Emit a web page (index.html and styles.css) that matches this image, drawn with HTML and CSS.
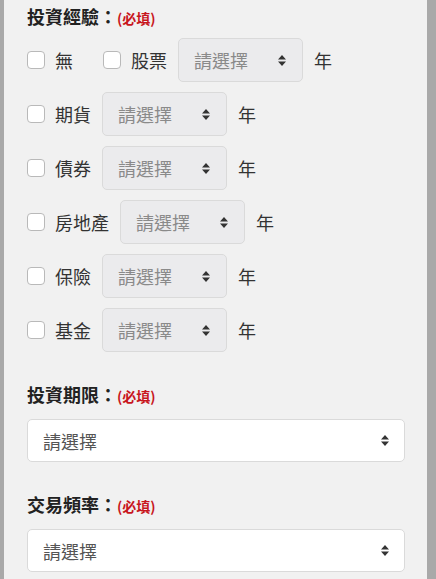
FILE: index.html
```html
<!DOCTYPE html>
<html lang="zh-Hant">
<head>
    <meta charset="UTF-8">
    <meta name="viewport" content="width=device-width, initial-scale=1.0">
    <title>投資經驗</title>
    <link rel="stylesheet" href="styles.css">
</head>
<body>
    <div class="form-panel">
        <h3 class="field-title">投資經驗：<span class="required">(必填)</span></h3>
        <div class="exp-list">
            <div class="exp-row">
                <label class="check-item gap-right"><span class="checkbox"></span>無</label>
                <label class="check-item"><span class="checkbox"></span>股票</label>
                <div class="select-box small disabled">請選擇<svg class="arrows" width="8" height="11" viewBox="0 0 8 11"><path d="M4 0 L8 4.5 H0 Z M0 6.5 H8 L4 11 Z" fill="#333"/></svg></div>
                <span class="unit">年</span>
            </div>
            <div class="exp-row">
                <label class="check-item"><span class="checkbox"></span>期貨</label>
                <div class="select-box small disabled">請選擇<svg class="arrows" width="8" height="11" viewBox="0 0 8 11"><path d="M4 0 L8 4.5 H0 Z M0 6.5 H8 L4 11 Z" fill="#333"/></svg></div>
                <span class="unit">年</span>
            </div>
            <div class="exp-row">
                <label class="check-item"><span class="checkbox"></span>債券</label>
                <div class="select-box small disabled">請選擇<svg class="arrows" width="8" height="11" viewBox="0 0 8 11"><path d="M4 0 L8 4.5 H0 Z M0 6.5 H8 L4 11 Z" fill="#333"/></svg></div>
                <span class="unit">年</span>
            </div>
            <div class="exp-row">
                <label class="check-item"><span class="checkbox"></span>房地產</label>
                <div class="select-box small disabled">請選擇<svg class="arrows" width="8" height="11" viewBox="0 0 8 11"><path d="M4 0 L8 4.5 H0 Z M0 6.5 H8 L4 11 Z" fill="#333"/></svg></div>
                <span class="unit">年</span>
            </div>
            <div class="exp-row">
                <label class="check-item"><span class="checkbox"></span>保險</label>
                <div class="select-box small disabled">請選擇<svg class="arrows" width="8" height="11" viewBox="0 0 8 11"><path d="M4 0 L8 4.5 H0 Z M0 6.5 H8 L4 11 Z" fill="#333"/></svg></div>
                <span class="unit">年</span>
            </div>
            <div class="exp-row">
                <label class="check-item"><span class="checkbox"></span>基金</label>
                <div class="select-box small disabled">請選擇<svg class="arrows" width="8" height="11" viewBox="0 0 8 11"><path d="M4 0 L8 4.5 H0 Z M0 6.5 H8 L4 11 Z" fill="#333"/></svg></div>
                <span class="unit">年</span>
            </div>
        </div>

        <h3 class="field-title spaced">投資期限：<span class="required">(必填)</span></h3>
        <div class="select-box full">請選擇<svg class="arrows" width="8" height="11" viewBox="0 0 8 11"><path d="M4 0 L8 4.5 H0 Z M0 6.5 H8 L4 11 Z" fill="#333"/></svg></div>

        <h3 class="field-title spaced">交易頻率：<span class="required">(必填)</span></h3>
        <div class="select-box full">請選擇<svg class="arrows" width="8" height="11" viewBox="0 0 8 11"><path d="M4 0 L8 4.5 H0 Z M0 6.5 H8 L4 11 Z" fill="#333"/></svg></div>
    </div>
</body>
</html>
```

FILE: styles.css
```css
body {
    margin: 0;
    padding: 0;
    background-color: #f1f1f1;
    font-family: "Noto Sans CJK TC", "Noto Sans", sans-serif;
    color: #333;
}
.form-panel {
    min-height: 579px;
    box-sizing: border-box;
    border-left: 4px solid #a9a9a9;
    border-right: 9px solid #a9a9a9;
    padding: 4px 22px 0 23px;
}
.field-title {
    margin: 0;
    font-size: 18px;
    line-height: 24px;
    font-weight: bold;
    color: #222;
    display: flex;
    align-items: baseline;
}
.field-title.spaced {
    margin-top: 30px;
    margin-bottom: 11px;
}
.required {
    color: #c8161d;
    font-size: 14px;
    font-weight: bold;
}
.exp-list {
    margin-top: 8px;
    display: flex;
    flex-direction: column;
    gap: 10px;
}
.exp-row {
    display: flex;
    align-items: center;
    gap: 11px;
    height: 44px;
}
.check-item {
    display: flex;
    align-items: center;
    gap: 10px;
    font-size: 18px;
    color: #333;
}
.gap-right {
    margin-right: 19px;
}
.checkbox {
    width: 16px;
    height: 16px;
    border: 1px solid #b9b9b9;
    border-radius: 4px;
    background-color: white;
}
.unit {
    font-size: 18px;
    color: #333;
}
.select-box {
    display: flex;
    align-items: center;
    justify-content: space-between;
    box-sizing: border-box;
    border: 1px solid #dadada;
    border-radius: 5px;
    font-size: 18px;
    color: #777;
}
.select-box.small {
    width: 125px;
    height: 44px;
    padding: 0 16px 0 15px;
}
.select-box.disabled {
    background-color: #ebebed;
    color: #8a8a8a;
}
.select-box.full {
    height: 43px;
    background-color: white;
    padding: 0 15px 0 15px;
    color: #555;
}
.arrows {
    flex-shrink: 0;
}
```
